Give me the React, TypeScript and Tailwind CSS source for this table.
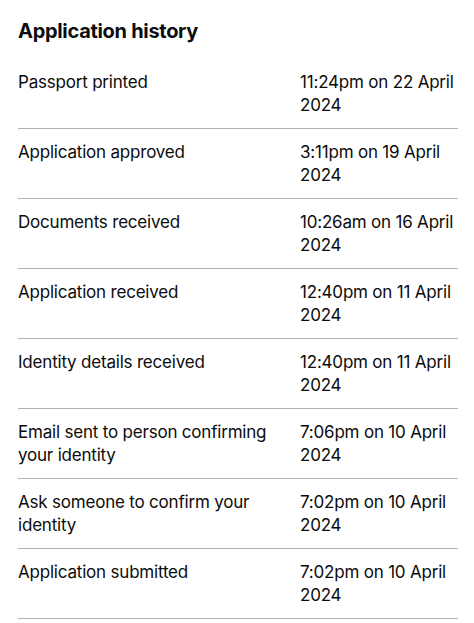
const rows: [string, string][] = [
  ["Passport printed", "11:24pm on 22 April 2024"],
  ["Application approved", "3:11pm on 19 April 2024"],
  ["Documents received", "10:26am on 16 April 2024"],
  ["Application received", "12:40pm on 11 April 2024"],
  ["Identity details received", "12:40pm on 11 April 2024"],
  ["Email sent to person confirming your identity", "7:06pm on 10 April 2024"],
  ["Ask someone to confirm your identity", "7:02pm on 10 April 2024"],
  ["Application submitted", "7:02pm on 10 April 2024"],
];

export default function App() {
  return (
    <div className="min-h-[623px] bg-white px-[18px] pt-[19px] text-[#0b0c0c] font-['Inter','Noto_Sans',sans-serif]">
      <h2 className="text-[20px] leading-[25px] font-bold tracking-[-0.3px]">Application history</h2>
      <dl className="mt-[15px] w-[440px]">
        {rows.map(([k, v]) => (
          <div key={k + v} className="grid grid-cols-[282px_1fr] border-b border-[#b1b4b6] pt-[12px] pb-[11px] text-[17px] leading-[23px] tracking-[-0.2px]">
            <dt className="pr-5">{k}</dt>
            <dd>{v}</dd>
          </div>
        ))}
      </dl>
    </div>
  );
}
